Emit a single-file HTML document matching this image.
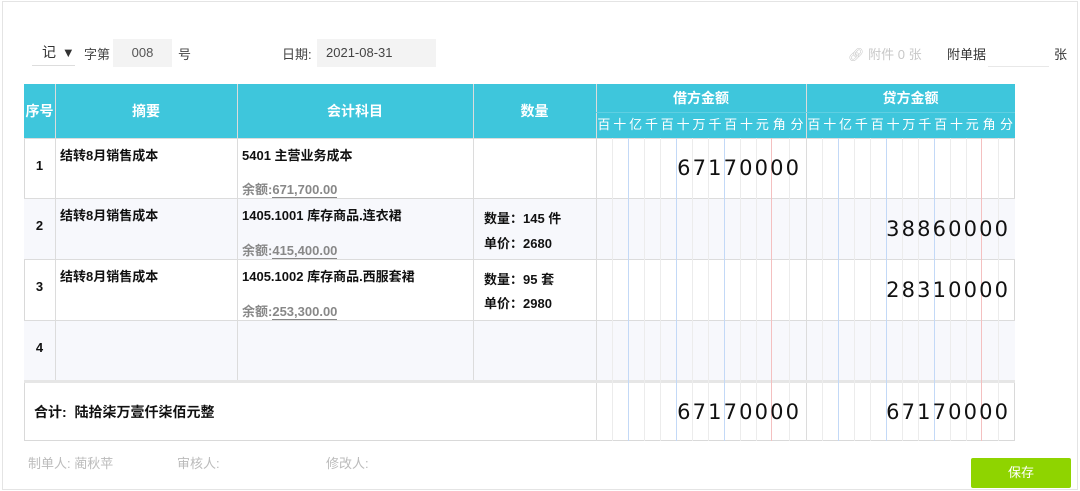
<!DOCTYPE html>
<html><head><meta charset="utf-8"><style>
*{margin:0;padding:0;box-sizing:border-box}
body{width:1080px;height:491px;background:#fff;position:relative;overflow:hidden;font-family:"Liberation Sans","Noto Sans CJK SC",sans-serif;color:#222}
.a{position:absolute}
.frame{left:2px;top:1px;width:1076px;height:489px;border:1px solid #e4e4e4}
.t{font-size:13px;color:#555}
.hd{background:#3ec6dc;color:#fff;font-weight:bold;font-size:14px;text-align:center}
.vl{position:absolute;width:1px;background:#dcdcdc}
.hl{position:absolute;height:1px;background:#dcdcdc}
.g{background:#ececec}.bl{background:#c3d9f7}.rd{background:#f4c0c0}
.b{font-weight:bold;font-size:13px;color:#111}
.bal{font-size:13px;color:#888;font-weight:bold}
.bal span{border-bottom:1px solid #888}
.d{font-size:21px;color:#111;text-align:center;font-family:"DejaVu Sans","Liberation Sans",sans-serif}
.n{display:flex}
.n span{width:16px;text-align:center}
.d span{width:15.5px}
</style></head><body>
<div class="a frame"></div>
<div class="a t" style="left:32px;top:38px;width:43px;height:28px;border-bottom:1px solid #ddd;line-height:28px;padding-left:10px;color:#333;font-size:14px">记 <span style="font-size:13px;margin-left:2px">▼</span></div>
<div class="a t" style="left:84px;top:44px;color:#444">字第</div>
<div class="a t" style="left:113px;top:39px;width:59px;height:28px;background:#f3f3f3;text-align:center;line-height:28px">008</div>
<div class="a t" style="left:178px;top:44px;color:#444">号</div>
<div class="a t" style="left:282px;top:44px;color:#444">日期:</div>
<div class="a t" style="left:317px;top:39px;width:119px;height:28px;background:#f3f3f3;line-height:28px;padding-left:9px;color:#444">2021-08-31</div>
<div class="a t" style="left:848px;top:44px;color:#c8c8c8">🔗︎ 附件 0 张</div>
<div class="a t" style="left:947px;top:44px;color:#333">附单据</div>
<div class="a" style="left:988px;top:66px;width:61px;height:1px;background:#e8e8e8"></div>
<div class="a t" style="left:1054px;top:44px;color:#333">张</div>

<div class="a" style="left:24px;top:84px;width:991px;height:357px;border:1px solid #d9d9d9"></div>
<div class="a hd" style="left:24px;top:84px;width:991px;height:54px"></div>
<div class="a" style="left:24px;top:198px;width:991px;height:61px;background:#f7f8fc"></div>
<div class="a" style="left:24px;top:320px;width:991px;height:61px;background:#f7f8fc"></div>
<div class="a hd" style="left:24px;top:84px;width:31px;line-height:54px">序号</div>
<div class="a hd" style="left:55px;top:84px;width:182px;line-height:54px;background:none">摘要</div>
<div class="a hd" style="left:237px;top:84px;width:236px;line-height:54px;background:none">会计科目</div>
<div class="a hd" style="left:473px;top:84px;width:123px;line-height:54px;background:none">数量</div>
<div class="a hd" style="left:596px;top:84px;width:210px;line-height:28px;background:none">借方金额</div>
<div class="a hd" style="left:806px;top:84px;width:209px;line-height:28px;background:none">贷方金额</div>
<div class="vl" style="left:55px;top:84px;height:297px"></div>
<div class="vl" style="left:237px;top:84px;height:297px"></div>
<div class="vl" style="left:473px;top:84px;height:297px"></div>
<div class="vl" style="left:596px;top:84px;height:357px"></div>
<div class="vl" style="left:806px;top:84px;height:357px"></div>
<div class="hl" style="left:24px;top:138px;width:991px"></div>
<div class="hl" style="left:24px;top:198px;width:991px"></div>
<div class="hl" style="left:24px;top:259px;width:991px"></div>
<div class="hl" style="left:24px;top:320px;width:991px"></div>
<div class="hl" style="left:24px;top:380px;width:991px;height:3px;background:#e6e6e6"></div>

<div class="vl g" style="left:612px;top:138px;height:303px"></div>
<div class="vl bl" style="left:628px;top:138px;height:303px"></div>
<div class="vl g" style="left:644px;top:138px;height:303px"></div>
<div class="vl g" style="left:660px;top:138px;height:303px"></div>
<div class="vl bl" style="left:676px;top:138px;height:303px"></div>
<div class="vl g" style="left:692px;top:138px;height:303px"></div>
<div class="vl g" style="left:708px;top:138px;height:303px"></div>
<div class="vl bl" style="left:724px;top:138px;height:303px"></div>
<div class="vl g" style="left:740px;top:138px;height:303px"></div>
<div class="vl g" style="left:756px;top:138px;height:303px"></div>
<div class="vl rd" style="left:771px;top:138px;height:303px"></div>
<div class="vl g" style="left:789px;top:138px;height:303px"></div>
<div class="vl g" style="left:822px;top:138px;height:303px"></div>
<div class="vl bl" style="left:838px;top:138px;height:303px"></div>
<div class="vl g" style="left:854px;top:138px;height:303px"></div>
<div class="vl g" style="left:870px;top:138px;height:303px"></div>
<div class="vl bl" style="left:886px;top:138px;height:303px"></div>
<div class="vl g" style="left:902px;top:138px;height:303px"></div>
<div class="vl g" style="left:918px;top:138px;height:303px"></div>
<div class="vl bl" style="left:934px;top:138px;height:303px"></div>
<div class="vl g" style="left:950px;top:138px;height:303px"></div>
<div class="vl g" style="left:966px;top:138px;height:303px"></div>
<div class="vl rd" style="left:981px;top:138px;height:303px"></div>
<div class="vl g" style="left:998px;top:138px;height:303px"></div>
<div class="hl" style="left:596px;top:112px;width:419px;background:#5fcfe2"></div>
<div class="a n" style="left:596px;top:112px;width:419px;height:26px;color:#fff;font-size:13px;line-height:26px">
<span>百</span><span>十</span><span>亿</span><span>千</span><span>百</span><span>十</span><span>万</span><span>千</span><span>百</span><span>十</span><span>元</span><span style="width:18px">角</span><span style="width:18px">分</span><span>百</span><span>十</span><span>亿</span><span>千</span><span>百</span><span>十</span><span>万</span><span>千</span><span>百</span><span>十</span><span>元</span><span style="width:18px">角</span><span style="width:17px">分</span>
</div>

<div class="a b" style="left:24px;top:158px;width:31px;text-align:center">1</div>
<div class="a b" style="left:24px;top:218px;width:31px;text-align:center">2</div>
<div class="a b" style="left:24px;top:279px;width:31px;text-align:center">3</div>
<div class="a b" style="left:24px;top:340px;width:31px;text-align:center">4</div>
<div class="a b" style="left:60px;top:145px">结转8月销售成本</div>
<div class="a b" style="left:60px;top:205px">结转8月销售成本</div>
<div class="a b" style="left:60px;top:266px">结转8月销售成本</div>
<div class="a b" style="left:242px;top:145px">5401 主营业务成本</div>
<div class="a bal" style="left:242px;top:179px">余额:<span>671,700.00</span></div>
<div class="a b" style="left:242px;top:205px">1405.1001 库存商品.连衣裙</div>
<div class="a bal" style="left:242px;top:240px">余额:<span>415,400.00</span></div>
<div class="a b" style="left:242px;top:266px">1405.1002 库存商品.西服套裙</div>
<div class="a bal" style="left:242px;top:301px">余额:<span>253,300.00</span></div>
<div class="a b" style="left:484px;top:208px">数量：145 件</div>
<div class="a b" style="left:484px;top:233px">单价：2680</div>
<div class="a b" style="left:484px;top:269px">数量：95 套</div>
<div class="a b" style="left:484px;top:293px">单价：2980</div>
<div class="a b" style="left:34px;top:402px;font-size:14px">合计:&nbsp; 陆拾柒万壹仟柒佰元整</div>

<div class="a n d" style="left:676px;top:156px"><span>6</span><span>7</span><span>1</span><span>7</span><span>0</span><span>0</span><span>0</span><span>0</span></div>
<div class="a n d" style="left:885px;top:217px"><span>3</span><span>8</span><span>8</span><span>6</span><span>0</span><span>0</span><span>0</span><span>0</span></div>
<div class="a n d" style="left:885px;top:278px"><span>2</span><span>8</span><span>3</span><span>1</span><span>0</span><span>0</span><span>0</span><span>0</span></div>
<div class="a n d" style="left:676px;top:400px"><span>6</span><span>7</span><span>1</span><span>7</span><span>0</span><span>0</span><span>0</span><span>0</span></div>
<div class="a n d" style="left:885px;top:400px"><span>6</span><span>7</span><span>1</span><span>7</span><span>0</span><span>0</span><span>0</span><span>0</span></div>

<div class="a t" style="left:28px;top:453px;color:#bbb">制单人: 蔺秋苹</div>
<div class="a t" style="left:177px;top:453px;color:#bbb">审核人:</div>
<div class="a t" style="left:326px;top:453px;color:#bbb">修改人:</div>
<div class="a" style="left:971px;top:458px;width:100px;height:30px;background:#8fd400;color:#fff;font-size:13px;text-align:center;line-height:30px;border-radius:2px">保存</div>
</body></html>
